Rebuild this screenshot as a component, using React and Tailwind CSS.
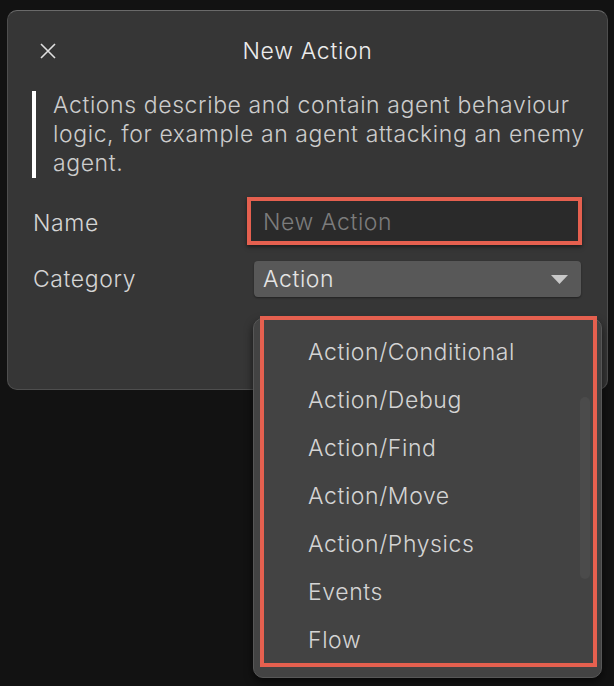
import React from 'react';

const categories = [
  'Action/Conditional',
  'Action/Debug',
  'Action/Find',
  'Action/Move',
  'Action/Physics',
  'Events',
  'Flow',
];

const font = { fontFamily: 'Inter, "Noto Sans", sans-serif' };

export default function App() {
  return (
    <div className="relative w-[614px] h-[686px] overflow-hidden bg-[#121212] pt-[10px] pl-[7px]" style={font}>
      {/* dialog */}
      <div className="w-[601px] h-[380px] rounded-[10px] border border-[#4e4e4e] border-t-[#6a6a6a] bg-[#363636] px-[24px] pt-[20px]">
        <div className="relative flex h-[40px] items-center justify-center">
          <button className="absolute left-[8px] top-[12px] text-[#e0e0e0]">
            <svg width="16" height="16" viewBox="0 0 16 16" fill="none" stroke="currentColor" strokeWidth="1.6">
              <path d="M1 1 L15 15 M15 1 L1 15" />
            </svg>
          </button>
          <h1 className="text-[23px] font-light tracking-[0.7px] text-[#ececec]">New Action</h1>
        </div>

        <div className="mt-[20px] mr-[-14px] flex">
          <div className="w-[4px] shrink-0 bg-white" />
          <p className="pl-[17px] text-[23px] font-light leading-[29px] tracking-[0.6px] text-[#cccccc]">
            Actions describe and contain agent behaviour logic, for example an agent attacking an enemy agent.
          </p>
        </div>

        <div className="mt-[19px] flex h-[48px] items-center">
          <span className="w-[215px] pl-[1px] pt-[4px] text-[23px] font-light tracking-[0.6px] text-[#d4d4d4]">Name</span>
          <div className="flex h-[48px] w-[335px] items-center border-4 border-[#e5604f] bg-[#2a2a2a] pl-[12px] pt-[3px] shadow-[0_2px_4px_rgba(0,0,0,0.5)]">
            <span className="text-[23px] font-light tracking-[0.6px] text-[#7c7c7c]">New Action</span>
          </div>
        </div>

        <div className="mt-[16px] flex h-[36px] items-center">
          <span className="w-[222px] pl-[1px] text-[23px] font-light tracking-[0.6px] text-[#d4d4d4]">Category</span>
          <div className="flex h-[36px] w-[327px] items-center justify-between rounded-[4px] bg-[#585858] pl-[9px] pr-[13px] shadow-[0_1px_2px_rgba(0,0,0,0.4)]">
            <span className="text-[23px] font-light tracking-[0.6px] text-[#e4e4e4]">Action</span>
            <svg width="17" height="9" viewBox="0 0 17 9">
              <path d="M0 0 H17 L8.5 9 Z" fill="#c8c8c8" />
            </svg>
          </div>
        </div>
      </div>

      {/* dropdown menu */}
      <div className="absolute left-[253px] top-[318px] h-[360px] w-[349px] rounded-[10px] border border-[#575757] bg-[#434343] shadow-[0_4px_8px_rgba(0,0,0,0.6)]">
        <div className="absolute right-[11px] top-[78px] h-[182px] w-[10px] rounded-[5px] bg-[#4b4b4b]" />
        <ul className="relative pt-[9px]">
          {categories.map((c) => (
            <li key={c} className="flex h-[48px] items-center pl-[54px] text-[23px] font-light tracking-[0.6px] text-[#d4d4d4]">
              {c}
            </li>
          ))}
        </ul>
        <div className="absolute left-[6px] top-[-3px] h-[351px] w-[337px] border-4 border-[#e5604f]" />
      </div>
    </div>
  );
}
